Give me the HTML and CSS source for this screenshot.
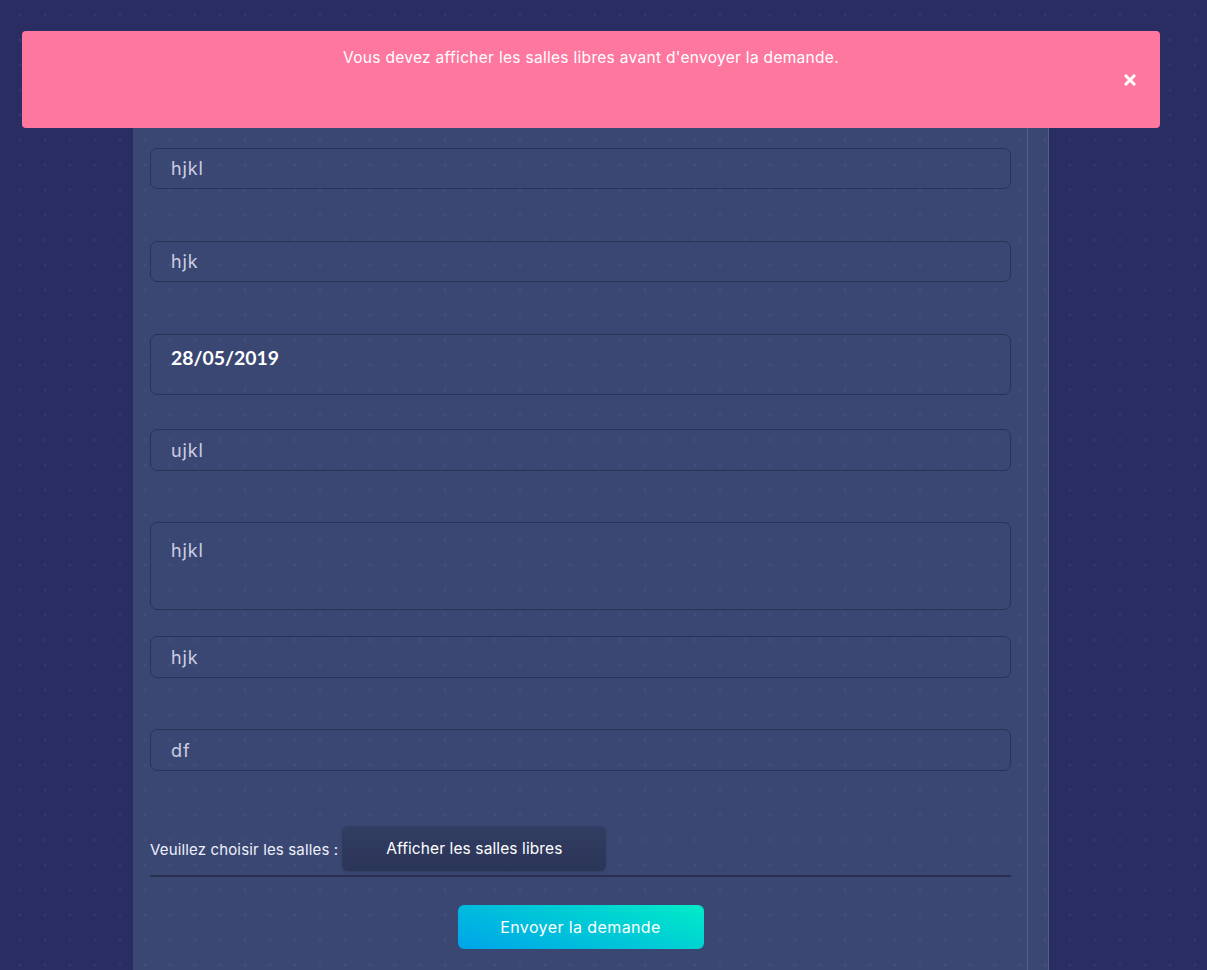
FILE: index.html
```html
<!DOCTYPE html>
<html lang="fr">
<head>
<meta charset="utf-8">
<title>Demande de salle</title>
<link rel="stylesheet" href="styles.css">
</head>
<body>
  <div class="page">
    <div class="card">
      <form class="card-main">
        <div class="field gap-52"><div class="input">hjkl</div></div>
        <div class="field gap-52"><div class="input">hjk</div></div>
        <div class="field gap-34"><div class="input date">28/05/2019</div></div>
        <div class="field gap-51"><div class="input tall">ujkl</div></div>
        <div class="field gap-26"><div class="input textarea">hjkl</div></div>
        <div class="field gap-51"><div class="input tall">hjk</div></div>
        <div class="field gap-55"><div class="input tall">df</div></div>
        <div class="rooms-row">
          <span class="rooms-label">Veuillez choisir les salles :</span>
          <button type="button" class="btn-dark">Afficher les salles libres</button>
        </div>
        <div class="separator"></div>
        <div class="submit-row">
          <button type="button" class="btn-send">Envoyer la demande</button>
        </div>
      </form>
      <div class="scroll-strip"></div>
    </div>
  </div>

  <div class="alert">
    <p class="alert-text">Vous devez afficher les salles libres avant d'envoyer la demande.</p>
    <button type="button" class="alert-close" aria-label="Fermer">
      <svg width="12" height="12" viewBox="0 0 12 12"><path d="M2 2 L10 10 M10 2 L2 10" stroke="#ffffff" stroke-width="3" stroke-linecap="square" fill="none"/></svg>
    </button>
  </div>
</body>
</html>
```

FILE: styles.css
```css
html, body {
  margin: 0;
  padding: 0;
  overflow: hidden;
  height: 100%;
}

body {
  font-family: "Inter", "Open Sans", sans-serif;
  background-color: #292d62;
  background-image: radial-gradient(circle, rgba(255, 255, 255, 0.06) 1px, transparent 1.6px);
  background-size: 25px 25px;
  background-position: 7.5px 2.5px;
  background-attachment: fixed;
}

.page {
  padding-left: 133px;
  padding-top: 40px;
}

.card {
  display: flex;
  width: 916px;
  background-color: #3b4773;
  background-image: radial-gradient(circle, rgba(255, 255, 255, 0.045) 1px, transparent 1.6px);
  background-size: 25px 25px;
  background-position: 7.5px 2.5px;
  background-attachment: fixed;
}

.card-main {
  width: 894px;
  box-sizing: border-box;
  padding: 108px 16px 40px 17px;
  display: flex;
  flex-direction: column;
}

.scroll-strip {
  width: 20px;
  border-left: 1px solid #566087;
  border-right: 1px solid #566087;
}

.field { display: block; }
.gap-52 { margin-bottom: 52px; }
.gap-51 { margin-bottom: 51px; }
.gap-34 { margin-bottom: 34px; }
.gap-26 { margin-bottom: 26px; }
.gap-55 { margin-bottom: 55px; }

.input {
  box-sizing: border-box;
  height: 41px;
  border: 1px solid #2a3356;
  border-radius: 7px;
  padding: 0 20px;
  display: flex;
  align-items: center;
  font-size: 18px;
  letter-spacing: 0.9px;
  color: #cbcfe2;
}

.input.tall {
  height: 42px;
}

.input.date {
  height: 61px;
  align-items: flex-start;
  padding-top: 11px;
  font-family: "Lato", sans-serif;
  font-weight: 700;
  font-size: 19.4px;
  letter-spacing: 0;
  color: #ffffff;
}

.input.textarea {
  height: 88px;
  align-items: flex-start;
  padding-top: 17px;
}

.rooms-row {
  display: flex;
  align-items: center;
  gap: 4px;
  height: 45px;
}

.rooms-label {
  font-size: 15px;
  letter-spacing: 0.15px;
  color: #eef0fa;
  padding-top: 2px;
}

.btn-dark {
  width: 264px;
  height: 45px;
  border: none;
  border-radius: 6px;
  background: linear-gradient(#323d63, #2b3557);
  color: #ffffff;
  font-family: inherit;
  font-size: 15.5px;
  letter-spacing: 0.1px;
  box-shadow: 0 1px 2px rgba(0, 0, 0, 0.15);
}

.separator {
  margin-top: 4px;
  height: 2px;
  background: #29304f;
}

.submit-row {
  display: flex;
  justify-content: center;
  margin-top: 28px;
}

.btn-send {
  width: 246px;
  height: 44px;
  border: none;
  border-radius: 6px;
  background: linear-gradient(20deg, #00a4ea 0%, #00c6d8 50%, #00ecc8 100%);
  color: #ffffff;
  font-family: inherit;
  font-size: 16px;
  letter-spacing: 0.4px;
}

.alert {
  position: fixed;
  top: 31px;
  left: 22px;
  width: 1138px;
  height: 97px;
  box-sizing: border-box;
  background: #fe779f;
  border-radius: 4px;
  padding-top: 16px;
}

.alert-text {
  margin: 0;
  text-align: center;
  color: #ffffff;
  font-size: 15.5px;
  letter-spacing: 0.3px;
  line-height: 22px;
}

.alert-close {
  position: absolute;
  right: 24px;
  top: 50%;
  transform: translateY(-50%);
  background: none;
  border: none;
  padding: 0;
  width: 12px;
  height: 12px;
  display: flex;
}
```
